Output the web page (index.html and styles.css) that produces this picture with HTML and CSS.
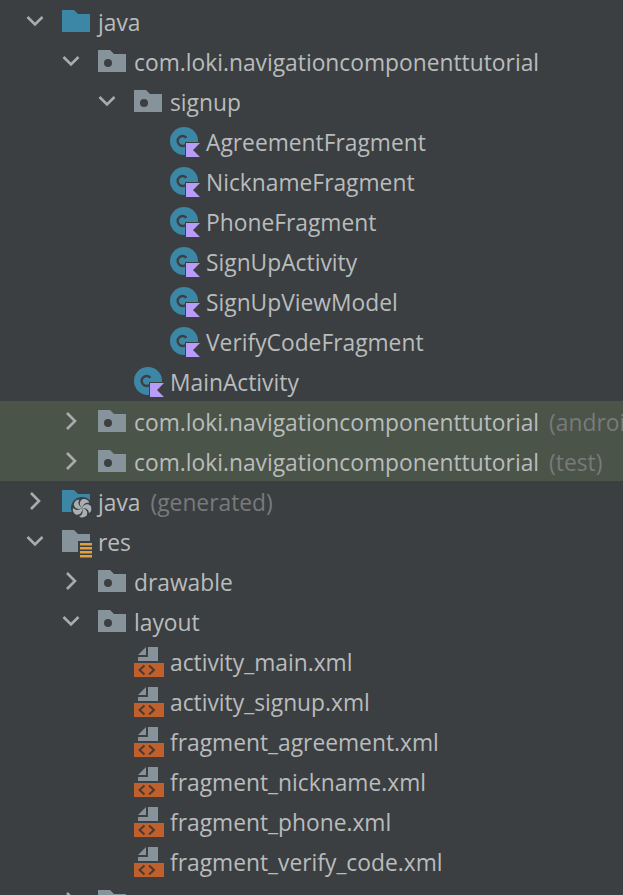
FILE: index.html
```html
<!DOCTYPE html>
<html lang="en">
<head>
    <meta charset="UTF-8">
    <title>Project tree</title>
    <link rel="stylesheet" href="styles.css">
</head>
<body>
    <svg class="defs" width="0" height="0">
        <symbol id="open" viewBox="0 0 20 20"><path d="M2.5 6 L10 13.5 L17.5 6" fill="none" stroke="#a9acad" stroke-width="2.6"/></symbol>
        <symbol id="closed" viewBox="0 0 20 20"><path d="M6 2 L14 10 L6 18" fill="none" stroke="#a9acad" stroke-width="2.6"/></symbol>
        <symbol id="source" viewBox="0 0 28 22"><path d="M0 0 H12 L16 4 H28 V22 H0 Z" fill="#3d87a6"/></symbol>
        <symbol id="package" viewBox="0 0 28 22"><path d="M0 0 H12 L16 4 H28 V22 H0 Z" fill="#87939a"/><circle cx="10" cy="13" r="4" fill="#3c3f41"/></symbol>
        <symbol id="generated" viewBox="0 0 32 30">
            <path d="M0 0 H12 L16 4 H28 V22 H0 Z" fill="#3d87a6"/>
            <circle cx="20" cy="18" r="11" fill="#3c3f41"/>
            <g fill="#a9b0b4">
                <path id="blade" d="M20 18 C17 15 17 11 21 9 C25 9 27 11 27 13 C24 12 21 14 20 18 Z"/>
                <use href="#blade" transform="rotate(72 20 18)"/>
                <use href="#blade" transform="rotate(144 20 18)"/>
                <use href="#blade" transform="rotate(216 20 18)"/>
                <use href="#blade" transform="rotate(288 20 18)"/>
            </g>
        </symbol>
        <symbol id="resources" viewBox="0 0 32 30">
            <path d="M0 0 H12 L16 4 H28 V22 H0 Z" fill="#87939a"/>
            <rect x="16" y="11" width="16" height="19" fill="#3c3f41"/>
            <g fill="#e0a03a">
                <rect x="18" y="13" width="12" height="2.5"/>
                <rect x="18" y="17" width="12" height="2.5"/>
                <rect x="18" y="21" width="12" height="2.5"/>
                <rect x="18" y="25" width="12" height="2.5"/>
            </g>
        </symbol>
        <symbol id="kotlin" viewBox="0 0 32 32">
            <circle cx="14" cy="14" r="14" fill="#3d87a6"/>
            <path d="M16.5 10.8 A5 5 0 1 0 16.5 17.2" fill="none" stroke="#3c3f41" stroke-width="2.4"/>
            <path d="M15 15 H32 L25 22 L32 31 H15 Z" fill="#3c3f41"/>
            <path d="M16 16 H30 L23 23 L30 30 H16 Z" fill="#b99bf8"/>
        </symbol>
        <symbol id="xml" viewBox="0 0 30 30">
            <path d="M4 8 L12 0 V8 Z" fill="#87939a"/>
            <path d="M14 0 H24 V14 H4 V10 H14 Z" fill="#87939a"/>
            <rect x="0" y="16" width="30" height="14" fill="#c0602d"/>
            <path d="M10.5 18.5 L5.5 23 L10.5 27.5 M15 18.5 L20 23 L15 27.5" fill="none" stroke="#4a3a33" stroke-width="2"/>
        </symbol>
    </svg>

    <div class="tree">
        <div class="row l0"><svg class="arrow"><use href="#open"/></svg><svg class="icon"><use href="#source"/></svg><span>java</span></div>
        <div class="row l1"><svg class="arrow"><use href="#open"/></svg><svg class="icon"><use href="#package"/></svg><span>com.loki.navigationcomponenttutorial</span></div>
        <div class="row l2"><svg class="arrow"><use href="#open"/></svg><svg class="icon"><use href="#package"/></svg><span>signup</span></div>
        <div class="row l3"><i class="arrow"></i><svg class="icon cls"><use href="#kotlin"/></svg><span>AgreementFragment</span></div>
        <div class="row l3"><i class="arrow"></i><svg class="icon cls"><use href="#kotlin"/></svg><span>NicknameFragment</span></div>
        <div class="row l3"><i class="arrow"></i><svg class="icon cls"><use href="#kotlin"/></svg><span>PhoneFragment</span></div>
        <div class="row l3"><i class="arrow"></i><svg class="icon cls"><use href="#kotlin"/></svg><span>SignUpActivity</span></div>
        <div class="row l3"><i class="arrow"></i><svg class="icon cls"><use href="#kotlin"/></svg><span>SignUpViewModel</span></div>
        <div class="row l3"><i class="arrow"></i><svg class="icon cls"><use href="#kotlin"/></svg><span>VerifyCodeFragment</span></div>
        <div class="row l2"><i class="arrow"></i><svg class="icon cls"><use href="#kotlin"/></svg><span>MainActivity</span></div>
        <div class="row l1 test"><svg class="arrow"><use href="#closed"/></svg><svg class="icon"><use href="#package"/></svg><span>com.loki.navigationcomponenttutorial</span><em>(androidTest)</em></div>
        <div class="row l1 test"><svg class="arrow"><use href="#closed"/></svg><svg class="icon"><use href="#package"/></svg><span>com.loki.navigationcomponenttutorial</span><em>(test)</em></div>
        <div class="row l0"><svg class="arrow"><use href="#closed"/></svg><svg class="icon wide"><use href="#generated"/></svg><span>java</span><em>(generated)</em></div>
        <div class="row l0"><svg class="arrow"><use href="#open"/></svg><svg class="icon wide"><use href="#resources"/></svg><span>res</span></div>
        <div class="row l1"><svg class="arrow"><use href="#closed"/></svg><svg class="icon"><use href="#package"/></svg><span>drawable</span></div>
        <div class="row l1"><svg class="arrow"><use href="#open"/></svg><svg class="icon"><use href="#package"/></svg><span>layout</span></div>
        <div class="row l2"><i class="arrow"></i><svg class="icon xml"><use href="#xml"/></svg><span>activity_main.xml</span></div>
        <div class="row l2"><i class="arrow"></i><svg class="icon xml"><use href="#xml"/></svg><span>activity_signup.xml</span></div>
        <div class="row l2"><i class="arrow"></i><svg class="icon xml"><use href="#xml"/></svg><span>fragment_agreement.xml</span></div>
        <div class="row l2"><i class="arrow"></i><svg class="icon xml"><use href="#xml"/></svg><span>fragment_nickname.xml</span></div>
        <div class="row l2"><i class="arrow"></i><svg class="icon xml"><use href="#xml"/></svg><span>fragment_phone.xml</span></div>
        <div class="row l2"><i class="arrow"></i><svg class="icon xml"><use href="#xml"/></svg><span>fragment_verify_code.xml</span></div>
        <div class="row l1"><svg class="arrow"><use href="#closed"/></svg><svg class="icon"><use href="#package"/></svg></div>
    </div>
</body>
</html>
```

FILE: styles.css
```css
html, body {
    margin: 0;
    height: 100%;
    overflow: hidden;
    background-color: #3c3f41;
}
.defs {
    display: block;
    height: 0;
}
.tree {
    padding-top: 1px;
    font-family: "Open Sans", sans-serif;
    font-size: 22.8px;
    color: #b9bcbd;
}
.row {
    display: flex;
    align-items: center;
    height: 40px;
    white-space: nowrap;
}
.row span, .row em {
    padding-top: 2px;
}
.l0 { padding-left: 25px; }
.l1 { padding-left: 61px; }
.l2 { padding-left: 97px; }
.l3 { padding-left: 133px; }
.test {
    background-color: #4b5448;
}
.arrow {
    display: block;
    flex: none;
    width: 20px;
    height: 20px;
    margin-right: 17px;
}
.icon {
    flex: none;
    width: 28px;
    height: 22px;
    margin-right: 8px;
}
.icon.wide {
    width: 32px;
    height: 30px;
    margin-top: 8px;
    margin-right: 4px;
}
.icon.cls {
    width: 32px;
    height: 32px;
    margin-top: 4px;
    margin-right: 4px;
}
.icon.xml {
    width: 30px;
    height: 30px;
    margin-top: 2px;
    margin-right: 6px;
}
em {
    font-style: normal;
    color: #787a7b;
    margin-left: 10px;
}
```
